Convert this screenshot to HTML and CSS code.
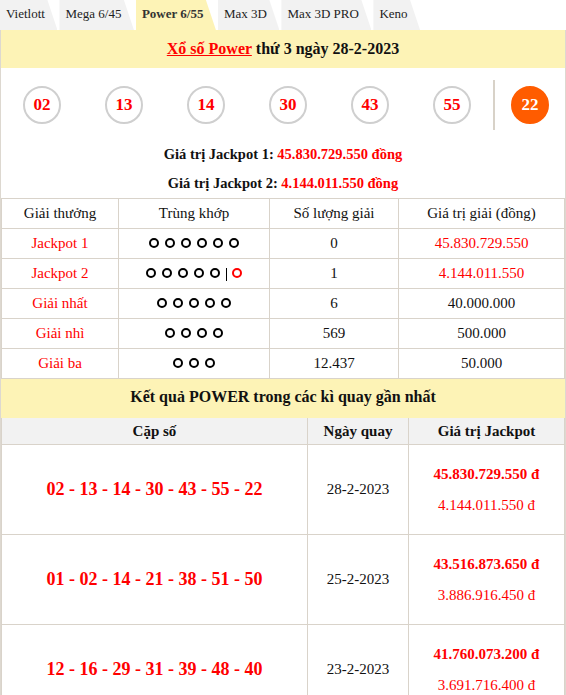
FILE: index.html
```html
<!DOCTYPE html>
<html lang="vi">
<head>
<meta charset="utf-8">
<title>Xổ số Power</title>
<link rel="stylesheet" href="styles.css">
</head>
<body>
<nav class="tabs">
  <a class="tab">Vietlott</a>
  <a class="tab">Mega 6/45</a>
  <a class="tab active">Power 6/55</a>
  <a class="tab">Max 3D</a>
  <a class="tab">Max 3D PRO</a>
  <a class="tab">Keno</a>
</nav>
<div class="box">
  <h2 class="bar"><a class="bar-link">Xổ số Power</a> thứ 3 ngày 28-2-2023</h2>
  <div class="balls">
    <div class="cell"><span class="ball">02</span></div>
    <div class="cell"><span class="ball">13</span></div>
    <div class="cell"><span class="ball">14</span></div>
    <div class="cell"><span class="ball">30</span></div>
    <div class="cell"><span class="ball">43</span></div>
    <div class="cell"><span class="ball">55</span></div>
    <div class="cell power"><span class="ball special">22</span></div>
  </div>
  <p class="jp">Giá trị Jackpot 1: <span class="red">45.830.729.550 đồng</span></p>
  <p class="jp">Giá trị Jackpot 2: <span class="red">4.144.011.550 đồng</span></p>
  <table class="prizes">
    <colgroup><col class="c1"><col class="c2"><col class="c3"><col class="c4"></colgroup>
    <tr><td>Giải thưởng</td><td>Trùng khớp</td><td>Số lượng giải</td><td>Giá trị giải (đồng)</td></tr>
    <tr><td class="red">Jackpot 1</td><td><i class="o"></i><i class="o"></i><i class="o"></i><i class="o"></i><i class="o"></i><i class="o"></i></td><td>0</td><td class="red">45.830.729.550</td></tr>
    <tr><td class="red">Jackpot 2</td><td><i class="o"></i><i class="o"></i><i class="o"></i><i class="o"></i><i class="o"></i><i class="sep"></i><i class="o o-red"></i></td><td>1</td><td class="red">4.144.011.550</td></tr>
    <tr><td class="red">Giải nhất</td><td><i class="o"></i><i class="o"></i><i class="o"></i><i class="o"></i><i class="o"></i></td><td>6</td><td>40.000.000</td></tr>
    <tr><td class="red">Giải nhì</td><td><i class="o"></i><i class="o"></i><i class="o"></i><i class="o"></i></td><td>569</td><td>500.000</td></tr>
    <tr><td class="red">Giải ba</td><td><i class="o"></i><i class="o"></i><i class="o"></i></td><td>12.437</td><td>50.000</td></tr>
  </table>
  <h2 class="bar bar2">Kết quả POWER trong các kì quay gần nhất</h2>
  <table class="history">
    <colgroup><col class="h1"><col class="h2"><col class="h3"></colgroup>
    <tr class="head"><th>Cặp số</th><th>Ngày quay</th><th>Giá trị Jackpot</th></tr>
    <tr><td class="nums">02 - 13 - 14 - 30 - 43 - 55 - 22</td><td>28-2-2023</td><td><p class="j1">45.830.729.550 đ</p><p class="j2">4.144.011.550 đ</p></td></tr>
    <tr><td class="nums">01 - 02 - 14 - 21 - 38 - 51 - 50</td><td>25-2-2023</td><td><p class="j1">43.516.873.650 đ</p><p class="j2">3.886.916.450 đ</p></td></tr>
    <tr><td class="nums">12 - 16 - 29 - 31 - 39 - 48 - 40</td><td>23-2-2023</td><td><p class="j1">41.760.073.200 đ</p><p class="j2">3.691.716.400 đ</p></td></tr>
  </table>
</div>
</body>
</html>
```
FILE: styles.css
```css
html, body {
  margin: 0;
  padding: 0;
  background: #fff;
  font-family: "Liberation Serif", "Times New Roman", serif;
  color: #111;
}

.tabs {
  display: flex;
  height: 30px;
}

.tab {
  display: block;
  height: 30px;
  line-height: 27px;
  font-size: 13px;
  padding: 0 12.5px 0 6px;
  margin-right: 2px;
  background: #f2f2f2;
  color: #222;
  clip-path: polygon(0 0, calc(100% - 10px) 0, 100% 100%, 0 100%);
}

.tab.active {
  background: #fdf3b6;
  font-weight: bold;
  color: #333;
}

.box {
  border-left: 1px solid #ddd8d0;
  border-right: 1px solid #ddd8d0;
}

.bar {
  margin: 0;
  background: #fdf3b6;
  height: 38px;
  line-height: 37px;
  text-align: center;
  font-size: 16px;
  font-weight: bold;
  color: #111;
}

.bar-link {
  color: #f00;
  text-decoration: underline;
}

.bar2 {
  height: 39px;
  line-height: 35px;
}

.balls {
  display: grid;
  grid-template-columns: repeat(6, 82px) 1fr;
  padding: 12px 0 10px;
}

.cell {
  height: 50px;
  display: flex;
  align-items: center;
  justify-content: center;
}

.cell.power {
  border-left: 2px solid #d8d2c8;
}

.ball {
  width: 34px;
  height: 34px;
  border: 2px solid #cfcfcf;
  border-radius: 50%;
  display: flex;
  align-items: center;
  justify-content: center;
  font-size: 17px;
  font-weight: bold;
  color: #f00;
}

.ball.special {
  background: #ff5c00;
  border-color: #ff5c00;
  color: #fff;
}

.jp {
  margin: 0;
  height: 29px;
  line-height: 29px;
  text-align: center;
  font-size: 14.5px;
  font-weight: bold;
}

.red {
  color: #f00;
}

table {
  width: 100%;
  border-collapse: collapse;
  table-layout: fixed;
}

td, th {
  border: 1px solid #d9d3ca;
  text-align: center;
  padding: 0;
}

.prizes td {
  height: 29px;
  font-size: 15px;
  font-weight: normal;
}

.c1 { width: 117px; }
.c2 { width: 151px; }
.c3 { width: 129px; }
.c4 { width: auto; }

.o {
  display: inline-block;
  width: 6px;
  height: 6px;
  border: 2px solid #000;
  border-radius: 50%;
  margin: 0 3px;
  vertical-align: 0;
}

.o-red {
  border-color: #f00;
}

.sep {
  display: inline-block;
  width: 1px;
  height: 13px;
  background: #000;
  margin: 0 2.5px;
  vertical-align: -3px;
}

.history tr:first-child th {
  border-top: none;
}

.h1 { width: 306px; }
.h2 { width: 101px; }
.h3 { width: auto; }

.history .head th {
  background: #f2f2f2;
  height: 26px;
  font-size: 15px;
  font-weight: bold;
}

.history td {
  height: 89px;
  font-size: 15px;
}

.history .nums {
  font-size: 18px;
  font-weight: bold;
  color: #f00;
}

.j1, .j2 {
  margin: 0;
  color: #f00;
  font-size: 15px;
  line-height: 31px;
}

.j1 {
  font-weight: bold;
}
```
